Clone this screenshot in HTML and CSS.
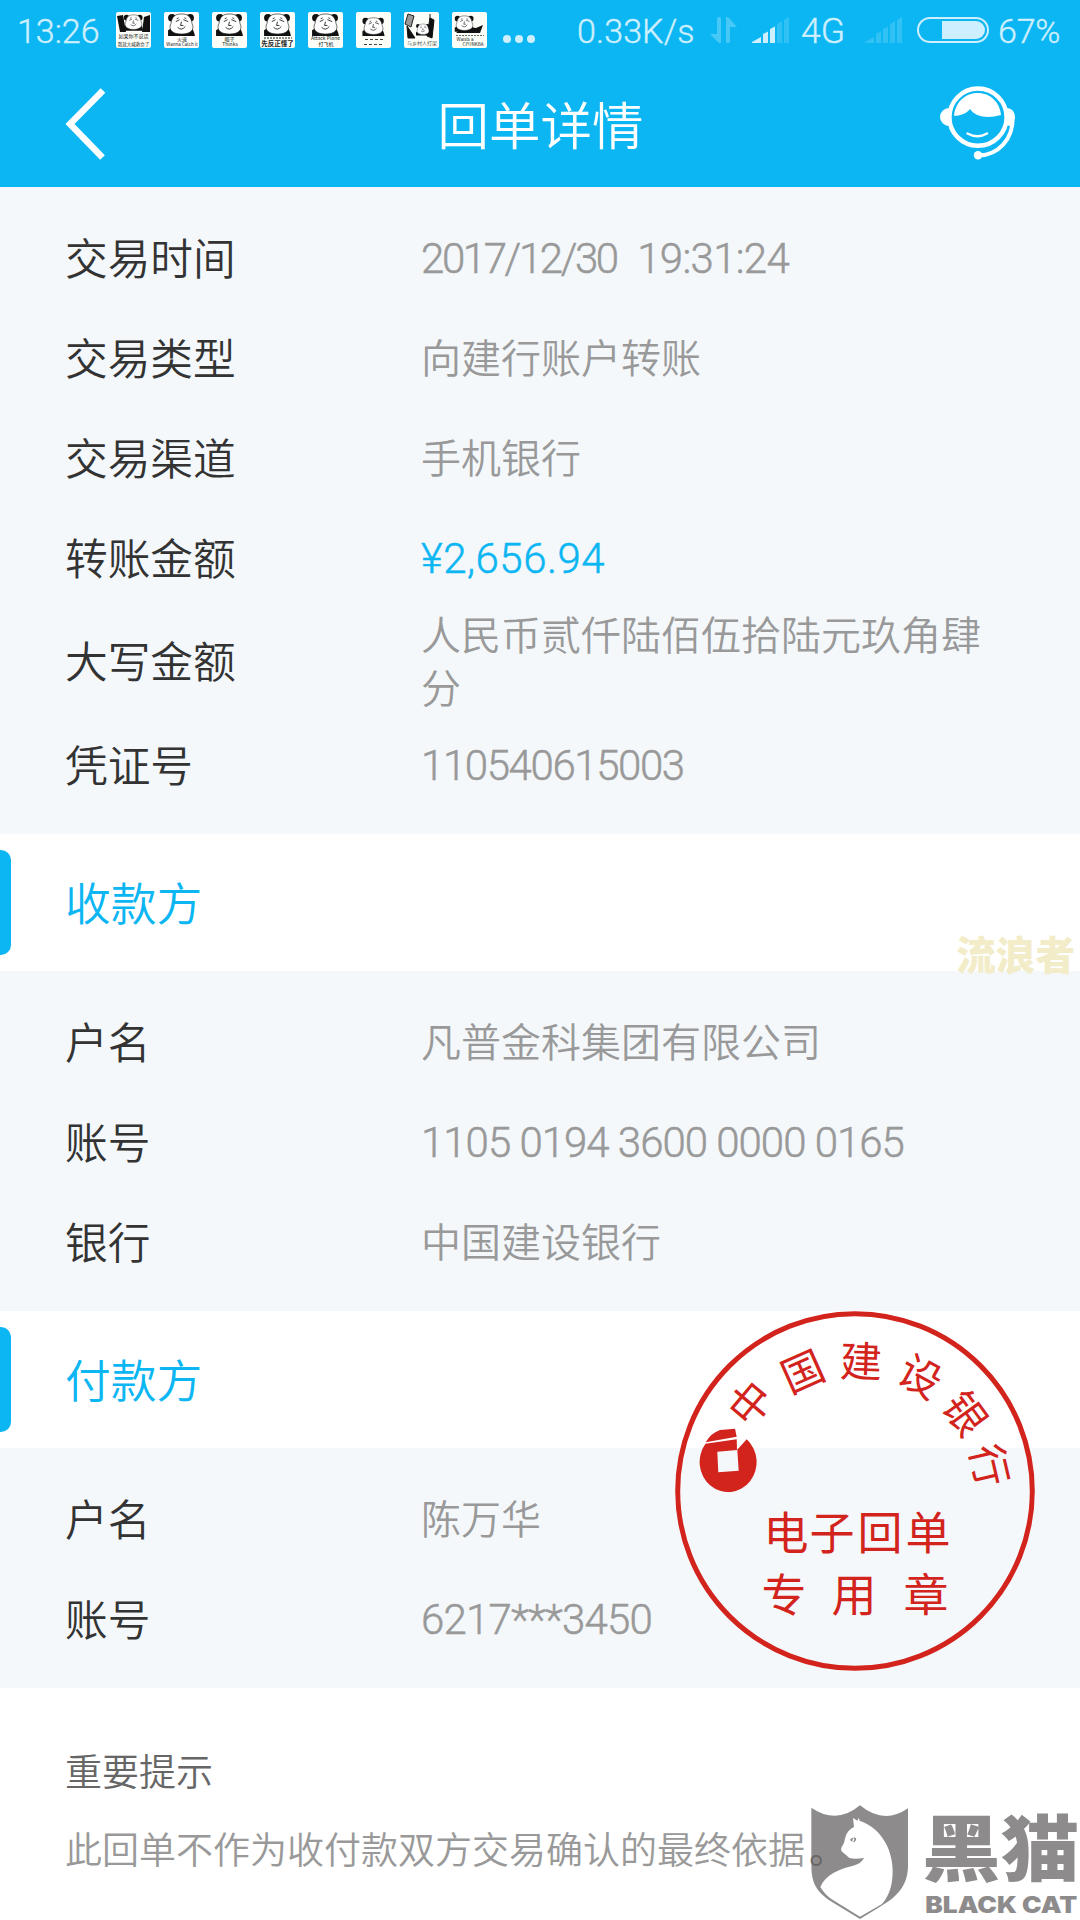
FILE: index.html
```html
<!DOCTYPE html>
<html lang="zh-CN">
<head>
    <meta charset="UTF-8">
    <meta name="viewport" content="width=device-width, initial-scale=1.0">
    <title>回单详情</title>
    <link rel="stylesheet" href="styles.css">
</head>
<body>
    <svg class="defs" width="0" height="0">
        <symbol id="panda" viewBox="0 0 36 24">
            <path d="M4 24 V18 Q8 15 10 14 H27 Q31 17 32 24 Z" fill="#111"/>
            <circle cx="8" cy="5" r="4" fill="#111"/>
            <circle cx="27" cy="5" r="4" fill="#111"/>
            <path d="M18 1 C26 1 28 5 29 11 C32 17 28 22 18 22 C8 22 4 17 7 11 C8 5 10 1 18 1 Z" fill="#fff" stroke="#222" stroke-width="0.7"/>
            <path d="M12 9 L16 7 M20 7 L25 9 M13 6 L15 5 M21 5 L23 6 M18 9 L17 13 H20 M14 15 Q18 19 22 14" fill="none" stroke="#333" stroke-width="1"/>
        </symbol>
        <symbol id="bars" viewBox="0 0 37 26">
            <path d="M0 25 L9 20 V26 H0 Z"/>
            <path d="M11 17 L16 14.500 V26 H11 Z"/>
            <path d="M18 12 L23 9.500 V26 H18 Z"/>
        </symbol>
        <symbol id="bars-high" viewBox="0 0 37 26">
            <path d="M25 7 L30 4 V26 H25 Z"/>
            <path d="M32 3 L37 0 V26 H32 Z"/>
        </symbol>
    </svg>

    <div class="top">
        <div class="status">
            <span class="time">13:26</span>
            <div class="notices">
                <svg class="notice" viewBox="0 0 35 36"><rect width="35" height="36" rx="2" fill="#fbfff8"/><path d="M1 4 L7 3 L10 20 H4 Z M28 5 L34 3 V20 H26 Z" fill="#111"/><use href="#panda" x="5" y="1" width="25" height="19"/><text x="17.500" y="26" font-size="5">如果你不说话</text><text x="17.500" y="34" font-size="4.500">我就大喊救命了</text></svg>
                <svg class="notice" viewBox="0 0 35 36"><rect width="35" height="36" rx="2" fill="#fff"/><use href="#panda" x="0" y="1" width="35" height="23"/><text x="18" y="29" font-size="5">火速</text><text x="18" y="34" font-size="4.500">Wanna Catch it</text></svg>
                <svg class="notice" viewBox="0 0 35 36"><rect width="35" height="36" rx="2" fill="#fbfff8"/><use href="#panda" x="0" y="1" width="35" height="23"/><text x="17.500" y="29" font-size="5">帽子</text><text x="18" y="34" font-size="5">Thinks</text></svg>
                <svg class="notice" viewBox="0 0 35 36"><rect width="35" height="36" rx="2" fill="#fbfff8"/><use href="#panda" x="0" y="1" width="35" height="23"/><path d="M4 26 H32" stroke="#222" stroke-width="1" stroke-dasharray="2 1"/><text x="17.500" y="33.500" font-size="6.500" font-weight="700">先反正懂了</text></svg>
                <svg class="notice" viewBox="0 0 35 36"><rect width="35" height="36" rx="2" fill="#fbfff8"/><use href="#panda" x="0" y="1" width="35" height="23"/><text x="17.500" y="28" font-size="5">Attack Plane</text><text x="18" y="33.500" font-size="5">打飞机</text></svg>
                <svg class="notice" viewBox="0 0 35 36"><rect width="35" height="36" rx="2" fill="#fbfff8"/><use href="#panda" x="2" y="5" width="31" height="19"/><path d="M9 27.500 H28 M8 32.500 H28" stroke="#444" stroke-width="1.200" stroke-dasharray="3 2"/></svg>
                <svg class="notice" viewBox="0 0 35 36"><rect width="35" height="36" rx="2" fill="#fbfff8"/><path d="M3 14 L11 26 H4 Z M26 6 L30 8 L28 26 L23 24 Z M26 2 V8" fill="#111" stroke="#111"/><path d="M4 2 L10 4 L7 15 L1 12 Z" fill="#999" stroke="#222"/><use href="#panda" x="10" y="9" width="18" height="17"/><text x="18" y="33" font-size="5" fill="#555">与乡村人打架</text></svg>
                <svg class="notice" viewBox="0 0 35 36"><rect width="35" height="36" rx="2" fill="#fbfff8"/><path d="M4 21 L12 14 L24 16 L31 13 L28 21 Z" fill="#111"/><use href="#panda" x="0" y="1" width="25" height="21"/><path d="M4 23.500 H32" stroke="#444" stroke-width="0.800" stroke-dasharray="2 1"/><text x="13" y="29" font-size="4.500">Waists a</text><text x="21" y="34" font-size="4.500">CPUNKBA</text></svg>
            </div>
            <div class="more"><i></i><i></i><i></i></div>
            <span class="speed">0.33K/s</span>
            <svg class="updown" viewBox="0 0 27 26"><path d="M7 1 Q9 -1 11 1 V26 H9 L0 17 H7 Z M16 0 H18 L27 10 H20 V25 Q18 27 16 25 Z"/></svg>
            <svg class="signal" viewBox="0 0 37 26"><use href="#bars"/><use href="#bars-high" class="off"/></svg>
            <span class="net">4G</span>
            <svg class="signal second" viewBox="0 0 37 26"><use href="#bars" class="off"/><use href="#bars-high" class="off"/></svg>
            <svg class="battery" viewBox="0 0 72 26"><rect x="1" y="1" width="70" height="24" rx="12" fill="none" stroke="#ceeffd" stroke-width="2"/><path d="M25 4 H59 A9 9 0 0 1 59 22 H25 Z"/></svg>
            <span class="percent">67%</span>
        </div>
        <div class="navbar">
            <svg class="back" viewBox="0 0 42 74"><path d="M38 3.500 L5 37 L37.500 70.500" fill="none" stroke="#fff" stroke-width="6.500"/></svg>
            <h1>回单详情</h1>
            <svg class="service" viewBox="940 86 76 74" fill="none" stroke="#fff">
                <circle cx="978" cy="117.200" r="28.600" stroke-width="4.500"/>
                <path d="M949 108 A9 9 0 0 0 949 126 Q946 117 949 108 Z M1006 108 C1012 108 1015 112 1015 118 L1010 126 L1006 125 Q1009 117 1006 108 Z" fill="#fff" stroke="none"/>
                <path d="M948 109.500 A8 8 0 0 0 948 124.500 Z" fill="#fff"/>
                <path d="M1012.800 117 C1013 140 998 155 979 155.500" stroke-width="4"/>
                <circle cx="978" cy="155.300" r="4.200" fill="#fff" stroke="none"/>
                <path d="M954 115.700 C956 100 967 93 978 93 C990 93 1000 102 1001 115 C988 119 975 117 970 109 C966 114 960 116 954 115.700 Z" fill="#fff" stroke="none"/>
                <path d="M967.500 133.500 Q977.500 139 987 133.500" stroke-width="2.500" stroke-linecap="round"/>
            </svg>
        </div>
    </div>

    <div class="section">
        <div class="row"><span class="label">交易时间</span><span class="value num"><span class="date">2017/12/30</span>&nbsp; <span class="clock">19:31:24</span></span></div>
        <div class="row"><span class="label">交易类型</span><span class="value">向建行账户转账</span></div>
        <div class="row"><span class="label">交易渠道</span><span class="value">手机银行</span></div>
        <div class="row"><span class="label">转账金额</span><span class="value num amount">¥2,656.94</span></div>
        <div class="row tall"><span class="label">大写金额</span><span class="value">人民币贰仟陆佰伍拾陆元玖角肆分</span></div>
        <div class="row"><span class="label">凭证号</span><span class="value num voucher">110540615003</span></div>
    </div>

    <div class="heading">
        <h2>收款方</h2>
        <span class="user-mark">流浪者</span>
    </div>
    <div class="section">
        <div class="row"><span class="label">户名</span><span class="value">凡普金科集团有限公司</span></div>
        <div class="row"><span class="label">账号</span><span class="value num account">1105 0194 3600 0000 0165</span></div>
        <div class="row"><span class="label">银行</span><span class="value">中国建设银行</span></div>
    </div>

    <div class="payer">
        <div class="heading">
            <h2>付款方</h2>
        </div>
        <div class="section">
            <div class="row"><span class="label">户名</span><span class="value">陈万华</span></div>
            <div class="row"><span class="label">账号</span><span class="value num masked">6217***3450</span></div>
        </div>
        <svg class="stamp" viewBox="0 0 360 360">
            <circle cx="180" cy="180" r="177.300" fill="none" stroke="#d2231c" stroke-width="5"/>
            <g class="arc">
                <text transform="translate(75 92) rotate(-50)" y="16">中</text>
                <text transform="translate(127.500 60) rotate(-24)" y="16">国</text>
                <text transform="translate(186 50) rotate(2)" y="16">建</text>
                <text transform="translate(245.500 65) rotate(29)" y="16">设</text>
                <text transform="translate(290.500 102) rotate(54)" y="16">银</text>
                <text transform="translate(315 154) rotate(77)" y="16">行</text>
            </g>
            <path d="M30.700 131.300 Q36 122 45 119 L60 117.700 L61.700 125.700 Z"/>
            <path fill-rule="evenodd" d="M30.500 132.800 L61.700 128.300 L62 139 L71.700 128.300 A28.500 30 0 1 1 30.500 132.800 Z M42.300 140.700 L43.300 161.300 L63.700 159.700 L62.300 139 Z"/>
            <g class="lines">
                <text x="111" y="239">电</text>
                <text x="157" y="239">子</text>
                <text x="205" y="239">回</text>
                <text x="253" y="239">单</text>
                <text x="109" y="301">专</text>
                <text x="179" y="301">用</text>
                <text x="251" y="301">章</text>
            </g>
        </svg>
    </div>

    <div class="tips">
        <h3>重要提示</h3>
        <p>此回单不作为收付款双方交易确认的最终依据<span class="stop">。</span></p>
        <svg class="brand" viewBox="0 0 900 420">
            <path d="M94 83 Q170 135 240 76 Q312 135 384 85 V258 C384 320 345 355 300 380 L240 417 L150 362 C110 335 94 310 94 255 Z"/>
            <path class="cat" d="M222 141 L219 114 L232 122 L236 114 L239 122 C300 142 338 205 338 272 C338 320 325 350 306 372 L240 410 L155 358 Q133 342 121 321 C137 282 180 266 220 257 Q245 250 252 234 Q225 238 208 234 Q200 226 190 218 Q181 212 184 203 Q194 190 196 172 Q202 150 222 141 Z"/>
            <path d="M210 180 Q214 172 221 173 Q216 178 217 186 Z M222 172 Q232 174 227 182 Q223 187 219 187 Q225 180 222 172 Z"/>
            <text class="brand-cn" x="426" y="286" textLength="472" lengthAdjust="spacingAndGlyphs">黑猫</text>
            <text class="brand-en" x="436" y="398" textLength="456" lengthAdjust="spacingAndGlyphs">BLACK CAT</text>
        </svg>
    </div>
</body>
</html>
```

FILE: styles.css
```css
* {
    box-sizing: border-box;
}
body {
    margin: 0;
    width: 1080px;
    height: 1920px;
    overflow: hidden;
    background: #fff;
    color: #333;
    font-family: "Noto Sans CJK SC", sans-serif;
    font-weight: 350;
}
h1, h2, h3, p {
    margin: 0;
    font-weight: 350;
}
.defs {
    display: block;
}
.top {
    height: 187px;
    background: #0bb6f3;
}
.status {
    display: flex;
    height: 60px;
    padding: 12px 0 0 17px;
    color: #ceeffd;
    fill: #ceeffd;
    font-family: Roboto, sans-serif;
    font-size: 34px;
    font-weight: 300;
    line-height: 38px;
    white-space: nowrap;
    -webkit-text-stroke: 0.4px;
}
.time {
    width: 99px;
}
.notices {
    display: flex;
    gap: 13px;
    width: 386px;
    -webkit-text-stroke: 0;
}
.notice {
    width: 35px;
    height: 36px;
    flex: none;
    fill: #222;
    font-family: "Noto Sans CJK SC", sans-serif;
    font-weight: 400;
    text-anchor: middle;
}
.more {
    display: flex;
    gap: 4px;
    width: 75px;
    padding-top: 23px;
    padding-left: 1px;
}
.more i {
    width: 8px;
    height: 8px;
    border-radius: 50%;
    background: #ceeffd;
}
.speed {
    width: 133px;
    letter-spacing: 0.1px;
}
.updown, .signal, .battery {
    flex: none;
    margin-top: 5px;
}
.updown {
    width: 27px;
    height: 26px;
    margin-right: 15px;
    fill: #48c8f6;
}
.signal {
    width: 37px;
    height: 26px;
}
.off {
    fill: #32c1f5;
}
.net {
    width: 76px;
    padding-left: 12px;
    font-size: 35.5px;
}
.battery {
    width: 72px;
    height: 26px;
    margin-left: 15px;
}
.percent {
    padding-left: 9px;
    letter-spacing: -0.2px;
}
.navbar {
    display: flex;
    justify-content: space-between;
    align-items: center;
    height: 127px;
    padding: 0 64px 0 65px;
}
.back {
    width: 42px;
    height: 74px;
    margin-right: 34px;
}
.navbar h1 {
    color: #fff;
    font-size: 51.5px;
    line-height: 127px;
    padding-bottom: 3px;
}
.service {
    width: 76px;
    height: 74px;
    margin-bottom: 1px;
}
.section {
    padding: 21px 66px 19px;
    background: #f4f8fb;
}
.row {
    display: flex;
    align-items: center;
    height: 100px;
}
.row.tall {
    height: 107px;
}
.label {
    width: 355px;
    flex: none;
    margin-left: -1px;
    margin-right: 1px;
    padding-bottom: 5px;
    font-size: 42.7px;
    line-height: 60px;
}
.value {
    width: 570px;
    padding-bottom: 4px;
    color: #999;
    font-size: 40px;
    line-height: 53px;
}
.num {
    padding-bottom: 0;
    font-family: Roboto, sans-serif;
    font-size: 42px;
    font-weight: 300;
    white-space: nowrap;
    -webkit-text-stroke: 0.5px;
}
.date {
    letter-spacing: -2.4px;
}
.clock {
    letter-spacing: -0.7px;
}
.amount {
    color: #0bb6f3;
    letter-spacing: 0.5px;
}
.voucher {
    letter-spacing: -1.4px;
}
.account {
    letter-spacing: -1px;
}
.masked {
    letter-spacing: -0.8px;
}
.heading {
    position: relative;
    display: flex;
    align-items: center;
    height: 137px;
}
.heading::before {
    content: "";
    width: 11px;
    height: 105px;
    border-radius: 0 10px 10px 0;
    background: #0bb6f3;
}
.heading h2 {
    margin-left: 54px;
    padding-bottom: 4px;
    color: #0bb6f3;
    font-size: 45.8px;
    line-height: 66px;
}
.user-mark {
    position: absolute;
    right: 5px;
    bottom: -10px;
    color: #f3ecc8;
    font-size: 39.6px;
    font-weight: 900;
    line-height: 56px;
}
.payer {
    position: relative;
}
.stamp {
    position: absolute;
    left: 675px;
    top: 0;
    width: 360px;
    height: 360px;
    fill: #d2231c;
    font-weight: 400;
    text-anchor: middle;
}
.arc {
    font-size: 42px;
}
.lines {
    font-size: 45px;
}
.tips {
    position: relative;
    height: 232px;
    padding: 55px 65px 0;
    font-size: 37px;
    line-height: 54px;
}
.tips h3 {
    color: #666;
    font-size: 37px;
}
.tips p {
    margin-top: 24px;
    color: #999;
    white-space: nowrap;
}
/* the full stop runs over the logo */
.stop {
    position: relative;
    z-index: 1;
    margin-left: 4px;
    color: #666;
}
.brand {
    position: absolute;
    right: 0;
    bottom: 0;
    width: 300px;
    height: 140px;
    fill: #8e8b8c;
}
.cat {
    fill: #fff;
}
.brand-cn {
    font-size: 214px;
    font-weight: 900;
}
.brand-en {
    font-family: Inter, sans-serif;
    font-size: 68px;
    font-weight: 900;
}
```
